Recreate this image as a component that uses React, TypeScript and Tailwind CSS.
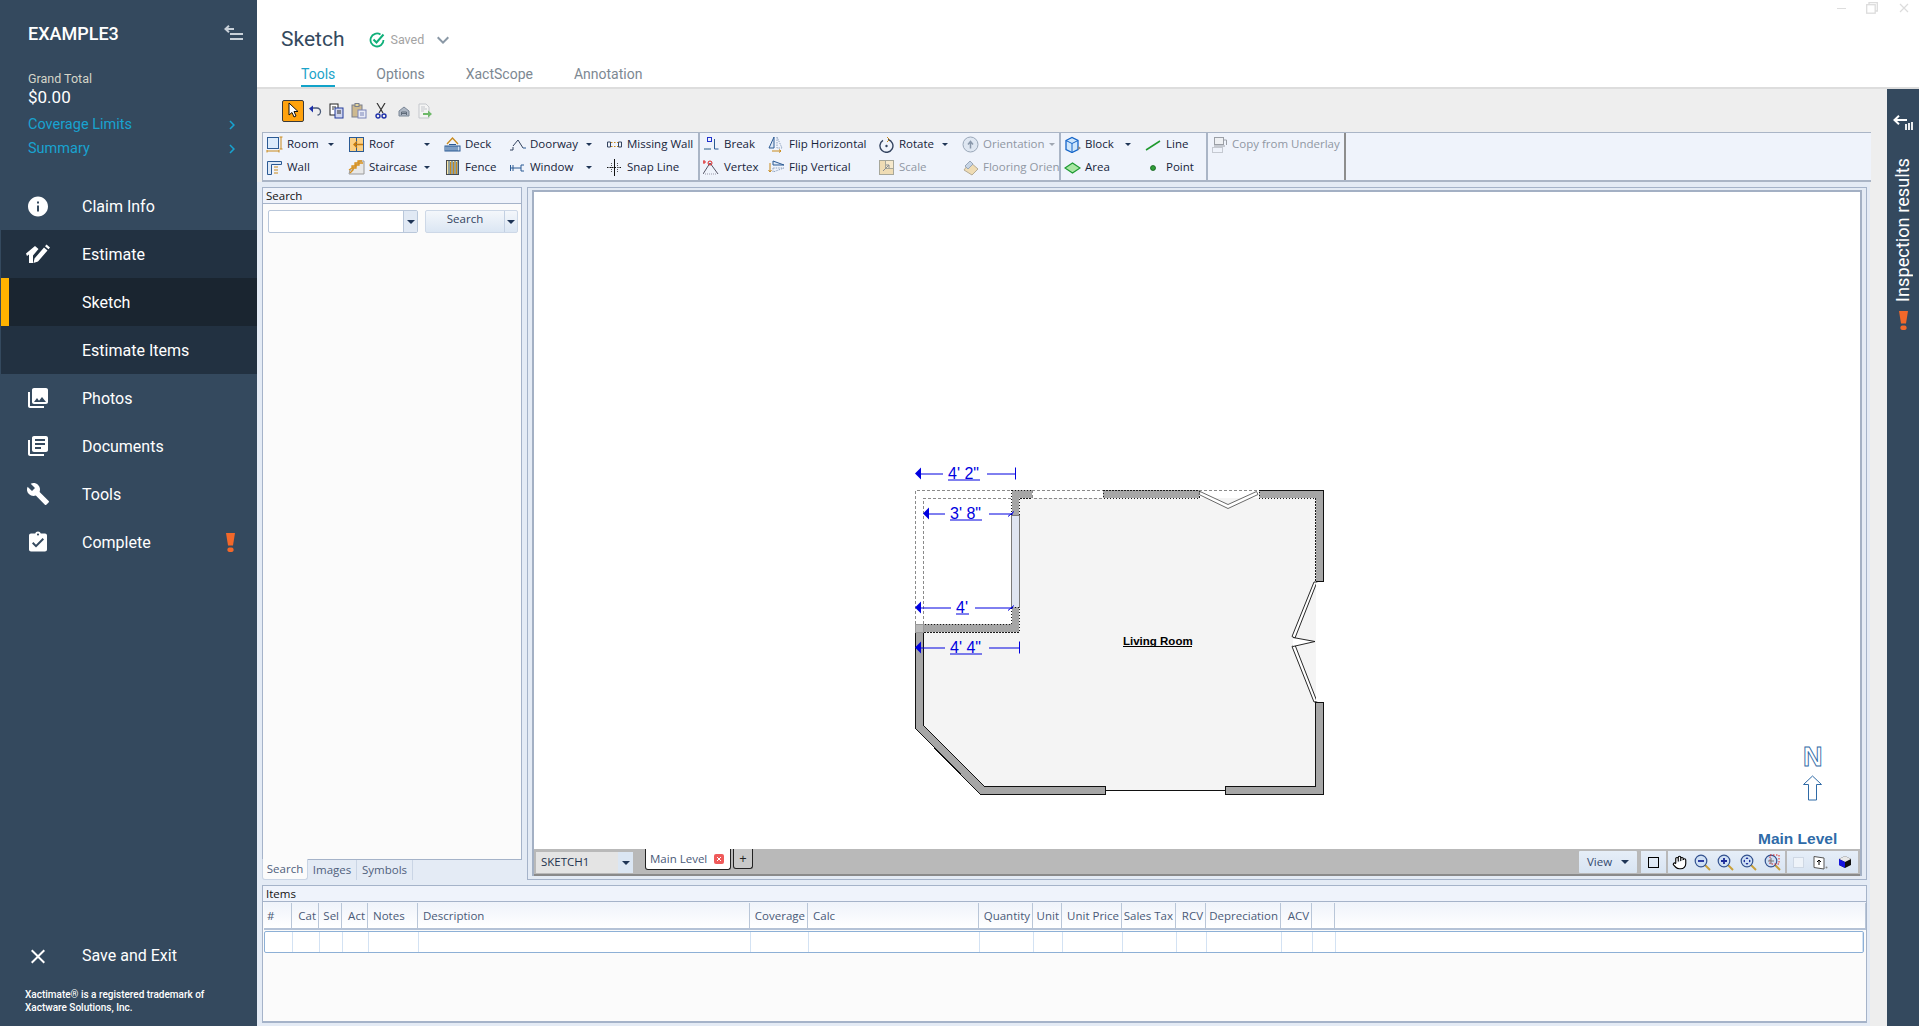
import React from "react";
import { MdInfo, MdPhotoLibrary, MdLibraryBooks, MdBuild, MdAssignmentTurnedIn, MdClose, MdChevronRight, MdKeyboardArrowDown } from "react-icons/md";

const uiFont = "font-['Open_Sans',sans-serif]";

const Ic = ({ children, w = 17 }: { children: React.ReactNode; w?: number }) => (
  <svg width={w} height={17} viewBox="0 0 17 17" fill="none" className="shrink-0">{children}</svg>
);

const B = "#2b5a94";
const O = "#c98a1c";

const icons: Record<string, React.ReactNode> = {
  room: <Ic><rect x="1.5" y="1.5" width="11" height="11" fill="#dcebfb" stroke={B} /><path d="M15 1v12M13.5 1h3M13.5 13h3M1 15h12M1 14v2.500M13 14v2.500" stroke={O} /></Ic>,
  wall: <Ic><path d="M1.500 15.500V2.500h14v3H5.500v10z" fill="#dde8f6" stroke={B} /><path d="M9 7v8M11 7v8" stroke={O} strokeDasharray="2 1" /></Ic>,
  roof: <Ic><rect x="1.500" y="1.500" width="14" height="14" fill="#fcd083" stroke={B} /><path d="M8.500 1.500v14" stroke={B} /><path d="M15 8.500H6M9 5.500l-3 3 3 3" stroke="#c77a0c" strokeWidth="1.400" /></Ic>,
  stair: <Ic><path d="M1 15l1-4h3V8h3V5h3V2h5v13z" fill="#e8e8e8" stroke="#9a9a9a" /><path d="M1 11l3-2V7h3V4h3V2h4M2 14l3-3V9h3V6h3V4h4" stroke="#d8901a" strokeWidth="1.300" /></Ic>,
  deck: <Ic><path d="M3 8l5.500-6L14 8" stroke="#c98a1c" strokeWidth="1.300" /><path d="M5 8.500h7" stroke={B} /><rect x="1" y="10" width="15" height="5" fill="#cfdff2" stroke={B} /><path d="M3 10v5M5 10v5M7 10v5M9 10v5M11 10v5M13 10v5" stroke={B} /></Ic>,
  fence: <Ic><rect x="2.500" y="1.500" width="12" height="14" fill="#f7e6a8" stroke="#4a4a4a" /><path d="M5 1.500v14M8 1.500v14M11 1.500v14M14 1.500v14" stroke={B} /><path d="M6.500 3v12M9.500 3v12M12.500 3v12" stroke={O} /></Ic>,
  door: <Ic><path d="M1 14h3v-3M4 10l5-6 5 8" stroke="#33435f" /><path d="M14 12h3" stroke={B} /></Ic>,
  window: <Ic><path d="M1.500 6v6M1.500 9H4M4 6v6M4 9h8M12 6h3M12 12h3M12 6v6" stroke={B} /></Ic>,
  missing: <Ic><path d="M1.500 6v5h3V6zM12.500 6v5h3V6z" stroke="#33435f" /><path d="M5 6.500h7M5 10.500h7" stroke={O} strokeDasharray="1.500 1.500" /></Ic>,
  snap: <Ic><path d="M8.500 0v17" stroke="#111" /><path d="M1 8.500h15" stroke="#111" strokeDasharray="1.500 1" /><path d="M5.500 4v9M11.500 4v9" stroke="#555" strokeDasharray="1 1" /></Ic>,
  break: <Ic><rect x="4.500" y="1.500" width="4" height="4" stroke="#2233cc" /><path d="M11.500 3v10h4M1 13h7" stroke={B} /><path d="M1 13h7" stroke="#8aa" strokeDasharray="1 1" /></Ic>,
  vertex: <Ic><path d="M0 15L7 4l8 11" stroke="#556" /><path d="M2 15h11" stroke="#99a" strokeDasharray="1 1" /><circle cx="7" cy="4" r="2" stroke="#d22" /><path d="M1 1v4M-1 3h4" stroke="#d22" /></Ic>,
  flipH: <Ic><path d="M6 1v11H1z" fill="#dfe8f5" stroke={B} /><path d="M9 1v11h5z" stroke="#8fa3c0" strokeDasharray="1.500 1" /><path d="M4 15h9M11 13.500l2 1.500-2 1.500" stroke={O} /></Ic>,
  flipV: <Ic><path d="M5 6V2l11 4z" fill="#dfe8f5" stroke={B} /><path d="M5 9v4l11-4z" stroke="#8fa3c0" strokeDasharray="1.500 1" /><path d="M2 4v9M.5 11l1.500 2 1.500-2" stroke={O} /></Ic>,
  rotate: <Ic><path d="M5 4.300A6.500 6.500 0 1 0 10 3.500" stroke="#33435f" strokeWidth="1.400" /><path d="M9 1l2.500 2.500L9 6" stroke={O} /><circle cx="8.500" cy="10" r="1.200" fill="#33435f" /></Ic>,
  scale: <Ic><rect x="1.500" y="1.500" width="14" height="14" fill="#efdcb4" stroke="#a7a79a" /><rect x="7.500" y="1.500" width="8" height="8" fill="#f6e9cc" stroke="#a7a79a" /><path d="M5 12l6-6M8 6h3v3" stroke="#8b8f93" /></Ic>,
  orient: <Ic><circle cx="8.500" cy="8.500" r="7.500" fill="#dfe7f2" stroke="#9aa7b8" /><path d="M8.500 12.500V6M6 8.500l2.500-3 2.500 3" stroke="#8a98ab" strokeWidth="1.500" /></Ic>,
  flooring: <Ic><path d="M2 11l6-8 8 7-6 6z" fill="#efdcb4" stroke="#b5ab95" /><path d="M3 7l5-5 3 3-5 5z" fill="#c7d5e6" stroke="#9aa7b8" /></Ic>,
  block: <Ic><path d="M2 4.500L8 1.500l6 3v9l-6 3-6-3z" fill="#cfe6fb" stroke="#1464c8" strokeWidth="1.300" /><path d="M2 4.500l6 3 6-3M8 7.500v9" stroke="#1464c8" /><path d="M14 10l3 2-3 2z" fill="#888" /></Ic>,
  area: <Ic><path d="M1 9l7.500-5L16 9l-7.500 5z" fill="#a9e6a3" stroke="#1d9a32" strokeWidth="1.200" /></Ic>,
  line: <Ic><path d="M1 14L15 5" stroke="#1f9a2e" strokeWidth="1.500" /></Ic>,
  point: <Ic><circle cx="8" cy="9" r="2.500" fill="#2e9e38" stroke="#125e1a" strokeWidth=".800" /></Ic>,
  copyU: <Ic><rect x="3.500" y="1.500" width="9" height="7" fill="#eef0f3" stroke="#9b9fa6" /><path d="M3 10h11M12.500 4h3v5" stroke="#9b9fa6" /><rect x="1.500" y="11.500" width="10" height="5" stroke="#9b9fa6" strokeDasharray="1 1" /></Ic>,
};

const Caret = ({ c = "#1f3556" }: { c?: string }) => (
  <svg width="6" height="3" viewBox="0 0 8 4" className="ml-auto shrink-0"><path d="M0 0h8L4 4z" fill={c} /></svg>
);

const Tool = ({ icon, label, caret, off, pr = "pr-[11px]" }: { icon: string; label: string; caret?: boolean; off?: boolean; pr?: string }) => (
  <div className={`flex items-center gap-[4px] pl-[3px] min-w-0 overflow-hidden whitespace-nowrap ${pr} ${off ? "text-[#8f97a3]" : "text-[#16233a]"}`}>
    {icons[icon]}
    <span>{label}</span>
    {caret && <Caret c={off ? "#a0a7b2" : "#1f3556"} />}
  </div>
);

const Ribbon = () => (
  <div className={`${uiFont} ml-[5px] mr-[16px] flex h-[50px] bg-[#eff3fb] border-t border-b-[2px] border-[#aab5c6] text-[11.5px]`}>
    <div className="grid h-full w-[438px] grid-cols-[82px_96px_65px_97px_97px] grid-rows-[22px_24px] border-l border-r-[2px] border-[#aab5c6]">
      <Tool icon="room" label="Room" caret /><Tool icon="roof" label="Roof" caret /><Tool icon="deck" label="Deck" /><Tool icon="door" label="Doorway" caret /><Tool icon="missing" label="Missing Wall" pr="" />
      <Tool icon="wall" label="Wall" /><Tool icon="stair" label="Staircase" caret /><Tool icon="fence" label="Fence" /><Tool icon="window" label="Window" caret /><Tool icon="snap" label="Snap Line" />
    </div>
    <div className="grid h-full w-[361px] grid-cols-[65px_110px_84px_100px] grid-rows-[22px_24px] border-r-[2px] border-[#aab5c6]">
      <Tool icon="break" label="Break" pr="" /><Tool icon="flipH" label="Flip Horizontal" pr="" /><Tool icon="rotate" label="Rotate" caret /><Tool icon="orient" label="Orientation" caret off pr="pr-[5px]" />
      <Tool icon="vertex" label="Vertex" pr="" /><Tool icon="flipV" label="Flip Vertical" pr="" /><Tool icon="scale" label="Scale" off /><Tool icon="flooring" label="Flooring Orientation" off pr="pr-[4px]" />
    </div>
    <div className="grid h-full w-[147px] grid-cols-[81px_64px] grid-rows-[22px_24px] border-r-[2px] border-[#aab5c6]">
      <Tool icon="block" label="Block" caret /><Tool icon="line" label="Line" />
      <Tool icon="area" label="Area" /><Tool icon="point" label="Point" />
    </div>
    <div className="grid h-full w-[138px] grid-rows-[22px_24px] border-r-[2px] border-[#8d8d8d]">
      <Tool icon="copyU" label="Copy from Underlay" off pr="" />
    </div>
  </div>
);

const QuickBar = () => (
  <div className="ml-[25px] flex h-[43px] items-center">
    <div className="flex h-[22px] w-[22px] items-center justify-center rounded-[2px] border border-[#3a3a3a] bg-[#ffa20d]">
      <svg width="14" height="17" viewBox="0 0 14 17"><path d="M3 1v12l3-2.500 2 4.500 2-1-2-4.500h4z" fill="#fff" stroke="#111" /></svg>
    </div>
    <svg width="14" height="12" viewBox="0 0 14 12" fill="none" className="ml-[4px]"><path d="M4 3h5a3.500 3.500 0 0 1 3.500 3.500c0 2-1.500 3.500-3 3.500" stroke="#4a5a78" strokeWidth="1.300" /><path d="M1 3.500L5 .5v7z" fill="#1c2fa8" /></svg>
    <svg width="16" height="16" viewBox="0 0 16 16" className="ml-[7px]" fill="none"><rect x="1" y="1" width="8" height="11" fill="#fff" stroke="#222" /><rect x="6" y="5" width="8" height="10" fill="#cfd5ee" stroke="#223a9a" /><path d="M3 4h4M3 6h2M8 8h4M8 10h4" stroke="#333" /></svg>
    <svg width="16" height="16" viewBox="0 0 16 16" className="ml-[6px]" fill="none"><rect x="1" y="2" width="10" height="12" fill="#cdb98f" stroke="#7a7f8c" /><rect x="4" y="0.500" width="4" height="3" fill="#e4d59a" stroke="#7a7f8c" /><rect x="7" y="7" width="8" height="8" fill="#e8ebf6" stroke="#7b84b8" /><path d="M9 10h4M9 12h4" stroke="#7b84b8" /></svg>
    <svg width="12" height="16" viewBox="0 0 12 16" className="ml-[8px]" fill="none"><path d="M2 0l6 10M10 0L4 10" stroke="#333" strokeWidth="1.200" /><circle cx="3" cy="13" r="2" stroke="#1d2fa8" strokeWidth="1.400" /><circle cx="9" cy="13" r="2" stroke="#1d2fa8" strokeWidth="1.400" /></svg>
    <svg width="12" height="12" viewBox="0 0 12 12" className="ml-[11px]" fill="none"><path d="M1 6l5-4 5 4v5H1z" fill="#aeb7c4" stroke="#7b8796" /><path d="M3.500 10V7h5v3M3.500 8.500h5" stroke="#5e6a79" /></svg>
    <svg width="15" height="16" viewBox="0 0 15 16" className="ml-[8px]" fill="none"><path d="M1 1h7l3 3v11H1z" fill="#f4f4f4" stroke="#c4c7cc" /><path d="M3 4h4M3 6h6M3 8h3" stroke="#c4c7cc" /><path d="M5 10h5V7.500l4 3.500-4 3.500V12H5z" fill="#6fb96a" /></svg>
  </div>
);

const SearchPanel = () => (
  <div className={`${uiFont} flex w-[260px] flex-col text-[11.5px]`}>
    <div className="flex min-h-0 flex-1 flex-col border border-[#a5b3c9] bg-[#fbfbfb]">
      <div className="h-[16px] border-b border-[#a5b3c9] bg-[#eff3fb] pl-[3px] leading-[15px] text-[#111]">Search</div>
      <div className="flex h-[23px] items-stretch gap-[7px] pl-[5px] pr-[3px] mt-[6px]">
        <div className="flex w-[150px] rounded-[2px] border border-[#b9c7da] bg-white">
          <div className="flex-1" />
          <div className="flex w-[14px] items-center justify-center border-l border-[#b9c7da] bg-[#e1e9f4]"><svg width="8" height="4" viewBox="0 0 8 4"><path d="M0 0h8L4 4z" fill="#1f3556" /></svg></div>
        </div>
        <div className="flex flex-1 rounded-[2px] border border-[#cdd8e7] bg-linear-to-b from-[#f4f7fb] to-[#dbe6f3]">
          <div className="flex-1 text-center leading-[16px] text-[#33445f]">Search</div>
          <div className="flex w-[13px] items-center justify-center border-l border-[#c3d0e2]"><svg width="8" height="4" viewBox="0 0 8 4"><path d="M0 0h8L4 4z" fill="#1f3556" /></svg></div>
        </div>
      </div>
    </div>
    <div className="flex h-[20px] text-[#4f607c]">
      <div className="flex w-[46px] items-center justify-center rounded-b-[3px] border-x border-b border-[#cad5e5] bg-[#fbfbfb] -mt-px">Search</div>
      <div className="flex w-[49px] items-center justify-center border-r border-[#cad5e5]">Images</div>
      <div className="flex w-[56px] items-center justify-center border-r border-[#cad5e5]">Symbols</div>
    </div>
  </div>
);

const Plan = () => {
  const wall = "#a6a6a6";
  const dot = { stroke: "#1a1a1a", strokeDasharray: "1.500 1.500" };
  const dim = "#0000e0";
  const Dim = ({ y, head, l1, t, tx, ux, uw, l2, l3, tick }: any) => (
    <g stroke="none">
      <path d={`M${head} ${y}l6 -6v12z`} fill={dim} />
      <path d={`M${head + 5} ${y + .5}H${l1}M${l2} ${y + .5}H${l3}`} stroke={dim} />
      <text x={tx} y={y + 5} fontFamily="'Liberation Sans',sans-serif" fontSize="16" fill={dim}>{t}</text>
      <path d={`M${ux} ${y + 6.500}h${uw}`} stroke={dim} />
      {tick === "bar" ? <path d={`M${l3 + .5} ${y - 6}v12`} stroke={dim} /> : <path d={`M${l3 - 5} ${y + 3}l6 -5`} stroke={dim} />}
    </g>
  );
  return (
    <svg viewBox="534 193 1326 656" className="absolute inset-0 h-full w-full" fill="none" shapeRendering="crispEdges">
      <path d="M1019 498H1316V786H1225V790H1105V786H984L923 726V632H1019Z" fill="#f4f4f4" />
      <path d="M915.500 624V490.500H1011M923.500 624V498.500H1011" stroke="#8a8a8a" strokeDasharray="3 2" />
      <path d="M1011.500 490.500h20.500v8h-13v17h-7.500z" fill={wall} stroke="#1a1a1a" strokeDasharray="1.500 1.500" />
      <rect x="1011.500" y="515.500" width="7.500" height="92" fill="#dfe5f1" stroke="#7a7a7a" />
      <path d="M1011.500 607.500h7.500v25h-103.500v-8h96z" fill={wall} stroke="#1a1a1a" strokeDasharray="1.500 1.500" />
      <rect x="1032" y="490.500" width="71" height="8" fill="#fff" stroke="#8a8a8a" strokeDasharray="3 2" />
      <rect x="1103" y="490.500" width="96" height="8" fill={wall} {...dot} />
      <path d="M1259 490.500h64.500v91.500h-8V498.500H1259z" fill={wall} {...dot} />
      <path d="M1316 582h7.500v-91.500" stroke="#111" />
      <path d="M1259 490.500h64.500" stroke="#111" />
      <path d="M1199 490.500h60" stroke="#8a8a8a" strokeDasharray="3 2" />
      <path d="M1315.500 702.500h8v92h-98.500v-8h90.500z" fill={wall} stroke="#111" />
      <path d="M915.500 632.500h8V726L984 786.500h121.500v8H980L915.500 729z" fill={wall} stroke="#111" />
      <path d="M915.500 624.500h8v8h-8z" fill="#b9b9b9" stroke="#999" />
      <path d="M1105.500 790.500H1225" stroke="#111" />
      <g shapeRendering="auto">
        <path d="M1199 495l29 14 30-14-1.500-3-28.500 13-28-13z" fill="#fff" stroke="#444" strokeWidth=".800" />
        <path d="M1314 582.500l-22 54.500 3 1.500 22-56z" fill="#fff" stroke="#111" strokeWidth=".900" />
        <path d="M1292 647l22 55.500 3-.500-22-56.500z" fill="#fff" stroke="#111" strokeWidth=".900" />
        <path d="M1293 638l22 4-22 5" stroke="#111" strokeWidth=".900" fill="#fff" />
        <rect x="1316" y="583" width="7" height="119" fill="#fff" />
      </g>
      <g shapeRendering="auto">
        <Dim y={474} head={915} l1={943} t={`4' 2"`} tx={948} ux={948} uw={32} l2={987} l3={1015} tick="bar" />
        <Dim y={514} head={923} l1={945} t={`3' 8"`} tx={950} ux={950} uw={32} l2={989} l3={1013} tick="slash" />
        <Dim y={608} head={915} l1={951} t={`4'`} tx={956} ux={956} uw={13} l2={975} l3={1013} tick="slash" />
        <Dim y={648} head={915} l1={945} t={`4' 4"`} tx={950} ux={950} uw={32} l2={989} l3={1019} tick="bar" />
        <text x="1123" y="645" fontFamily="'Liberation Sans',sans-serif" fontWeight="700" fontSize="11.500" fill="#000">Living Room</text>
        <path d="M1123 647h69" stroke="#000" />
        <text x="1803" y="766" fontFamily="'Liberation Sans',sans-serif" fontWeight="700" fontSize="27" fill="#fff" stroke="#2f6aa6" strokeWidth=".900">N</text>
        <path d="M1812.500 776.500l9 8.500h-5v15.500h-8V785h-5z" fill="#fff" stroke="#2f6aa6" />
        <text x="1758" y="844" fontFamily="'Liberation Sans',sans-serif" fontWeight="700" fontSize="15.500" fill="#2f6ba8">Main Level</text>
      </g>
    </svg>
  );
};

const Mag = ({ children }: { children?: React.ReactNode }) => (
  <svg width="17" height="17" viewBox="0 0 17 17" fill="none">
    <path d="M10 10l6 6" stroke="#c9a03a" strokeWidth="2" />
    <circle cx="7" cy="7" r="5.800" fill="#cfe0f5" stroke="#33528f" strokeWidth="1.200" />
    {children}
  </svg>
);

const StatusBar = () => (
  <div className={`${uiFont} flex h-[27px] items-start border-b-[2px] border-[#8a8a8a] bg-[#b9b9b9] pr-[2px] text-[11.5px]`}>
    <div className="ml-[2px] mt-[3px] flex h-[21px] w-[97px] bg-[#e4e4e4] text-[#23324e]">
      <div className="flex-1 pl-[5px] leading-[20px]">SKETCH1</div>
      <div className="flex w-[15px] items-center justify-center bg-[#dbe6f3]"><svg width="8" height="4" viewBox="0 0 8 4"><path d="M0 0h8L4 4z" fill="#1f3556" /></svg></div>
    </div>
    <div className="ml-[12px] flex h-[21px] w-[86px] items-center gap-[7px] rounded-b-[3px] border-x border-b border-[#222] bg-white pl-[4px] text-[#4a5a78]">
      <span>Main Level</span>
      <svg width="10" height="10" viewBox="0 0 10 10"><rect width="10" height="10" rx="2" fill="#ef5a5a" /><path d="M3 3l4 4M7 3L3 7" stroke="#fff" /></svg>
    </div>
    <div className="ml-[2px] flex h-[20px] w-[20px] items-center justify-center rounded-b-[3px] border-x border-b border-[#222] bg-[#c9c9c9] text-[13px] leading-none text-[#222]">+</div>
    <div className="ml-auto flex h-[22px] w-[58px] items-center justify-between rounded-[1px] bg-linear-to-b from-[#e6eef8] to-[#d8e4f2] px-[8px] mt-[2px] text-[#33496e]">
      <span>View</span>
      <svg width="8" height="4" viewBox="0 0 8 4"><path d="M0 0h8L4 4z" fill="#1f3556" /></svg>
    </div>
    <div className="ml-[4px] mt-[2px] flex h-[22px] w-[25px] items-center justify-center bg-linear-to-b from-[#e6eef8] to-[#d8e4f2]">
      <div className="h-[11px] w-[11px] border border-black" />
    </div>
    <div className="ml-[2px] mt-[2px] flex h-[22px] w-[117px] items-center justify-around bg-linear-to-b from-[#e6eef8] to-[#d8e4f2] px-[1px]">
      <svg width="15" height="15" viewBox="0 0 24 24" fill="#fff" stroke="#000" strokeWidth="1.800"><path d="M18 11V6a2 2 0 0 0-4 0M14 10V4a2 2 0 0 0-4 0v2M10 10.500V6a2 2 0 0 0-4 0v8" /><path d="M18 8a2 2 0 1 1 4 0v6a8 8 0 0 1-8 8h-2c-2.800 0-4.500-.900-6-2.400L2.400 16a2 2 0 0 1 2.800-2.800L6 14" /></svg>
      <Mag><path d="M4 7h6" stroke="#1c2c9a" strokeWidth="1.800" /></Mag>
      <Mag><path d="M4 7h6M7 4v6" stroke="#1c2c9a" strokeWidth="1.800" /></Mag>
      <Mag><path d="M7 3l1.500 2h-3zM7 11l1.500-2h-3zM3 7l2-1.500v3zM11 7l-2-1.500v3z" fill="#1c2c9a" /></Mag>
      <Mag><rect x="6" y="1" width="9" height="9" stroke="#d22" strokeDasharray="1.500 1.500" /><path d="M4 7h6M7 4v6" stroke="#777" /></Mag>
    </div>
    <div className="ml-[2px] mt-[2px] flex h-[22px] w-[71px] items-center justify-around bg-linear-to-b from-[#e6eef8] to-[#d8e4f2] px-[1px]">
      <div className="h-[11px] w-[11px] border border-[#cfd8e4] bg-[#eef3f9]" />
      <svg width="15" height="15" viewBox="0 0 15 15" fill="none"><path d="M1 1.500l10 1.500v11L1 12.500z" fill="#fff" stroke="#555" /><path d="M6 10V5.500M4 7l2-2 2 2" stroke="#000" /><circle cx="13.500" cy="12.500" r="1" fill="#888" /></svg>
      <svg width="14" height="14" viewBox="0 0 14 14"><path d="M7 1l6 3v6l-6 3-6-3V4z" fill="#111" /><path d="M7 1l6 3-6 3-6-3z" fill="#e8e8e8" /><path d="M1 4l6 3v6l-6-3z" fill="#1414e0" /></svg>
    </div>
  </div>
);

const cols = "grid grid-cols-[28px_27px_23px_26px_50px_332px_58px_171px_54px_29px_60px_54px_30px_75px_31px_23px_1fr]";
const heads: [string, string][] = [
  ["#", "l3"], ["Cat", "r"], ["Sel", "r"], ["Act", "r"], ["Notes", "l"], ["Description", "l"], ["Coverage", "r"], ["Calc", "l"],
  ["Quantity", "r"], ["Unit", "r"], ["Unit Price", "r"], ["Sales Tax", "r"], ["RCV", "r"], ["Depreciation", "r"], ["ACV", "r"], ["", "l"], ["", "l"],
];

const Items = () => (
  <div className={`${uiFont} flex h-[138px] flex-col border-x border-b-[2px] border-t border-[#a5b3c9] bg-[#fbfbfb] text-[11.5px]`}>
    <div className="h-[16px] border-b border-[#a5b3c9] bg-[#eff3fb] pl-[3px] leading-[15px] text-[#111]">Items</div>
    <div className={`${cols} ml-[1px] h-[28px] border-b-[2px] border-[#b4c2d6] bg-linear-to-b from-[#eff3fa] to-white pt-[1px] text-[#4a5a78]`}>
      {heads.map(([h, a], i) => (
        <div key={i} className={`flex items-center whitespace-nowrap border-r border-[#b9c6d8] ${a === "r" ? "justify-end pr-[2px]" : a === "l3" ? "pl-[3px]" : "pl-[5px]"}`}>{h}</div>
      ))}
    </div>
    <div className={`${cols} relative ml-[1px] mr-[2px] mt-px h-[22px] rounded-[2px] border border-[#8db0d6] bg-white`}>
      {heads.map((_, i) => <div key={i} className="border-r border-[#d3e2f3]" />)}
    </div>
  </div>
);

const Exclaim = ({ className = "" }: { className?: string }) => (
  <svg width="9" height="19" viewBox="0 0 9 19" className={className}><path d="M0 0h9L7 12.500H2z" fill="#f2682a" /><rect x="1.500" y="14.500" width="6" height="4.500" rx="1.800" fill="#f2682a" /></svg>
);

const Row = ({ icon, label, cls = "", bar, right }: { icon?: React.ReactNode; label: string; cls?: string; bar?: boolean; right?: React.ReactNode }) => (
  <div className={`ml-px flex h-12 items-center text-[16px] text-white ${cls}`}>
    {bar && <div className="h-full w-[8px] bg-[#ffb300] -mr-[8px]" />}
    <div className="ml-[25px] flex w-[24px] items-center justify-center">{icon}</div>
    <div className="ml-[32px] pt-[2px]">{label}</div>
    {right && <div className="ml-auto mr-[22px] flex">{right}</div>}
  </div>
);

const EstimateIcon = () => (
  <svg width="24" height="20" viewBox="0 0 24 20" fill="#fff">
    <path d="M0 9.500L9 2l3.500 3L7 11.500V19H3v-8.500L1 12z" />
    <path d="M8.500 14.500L18 3.500l3.500 3L12 17.500l-4.500 1.500zM19 2.300l1.500-1.800 3.500 3-1.500 1.800z" />
  </svg>
);

const Sidebar = () => (
  <aside className="flex w-[257px] shrink-0 flex-col bg-[#34495e] font-[Roboto,sans-serif]">
    <div className="h-[182px] shrink-0">
      <div className="flex h-[66px] items-center justify-between pl-[28px] pr-[14px]">
        <span className="text-[18px] font-medium text-white">EXAMPLE3</span>
        <svg width="19" height="16" viewBox="0 0 19 16" fill="none" stroke="#c9d1d9" strokeWidth="2"><path d="M10 4H2M5 .8L1.500 4 5 7.200" /><path d="M6 9h13M6 14h13" /></svg>
      </div>
      <div className="mt-[3px] h-[20px] pl-[28px] text-[12.500px] leading-[20px] text-[#d5d5c8]">Grand Total</div>
      <div className="-mt-[2px] h-[20px] pl-[28px] text-[17px] leading-[20px] text-white">$0.00</div>
      <div className="mt-[6px] flex h-[24px] items-center justify-between pl-[28px] pr-[16px] text-[14.500px] text-[#18a3d0]"><span>Coverage Limits</span><MdChevronRight size={18} /></div>
      <div className="flex h-[24px] items-center justify-between pl-[28px] pr-[16px] text-[14.500px] text-[#18a3d0]"><span>Summary</span><MdChevronRight size={18} /></div>
    </div>
    <Row icon={<MdInfo size={25} />} label="Claim Info" />
    <Row icon={<EstimateIcon />} label="Estimate" cls="bg-[#223141]" />
    <Row label="Sketch" cls="bg-[#1a2530]" bar />
    <Row label="Estimate Items" cls="bg-[#223141]" />
    <Row icon={<MdPhotoLibrary size={26} />} label="Photos" />
    <Row icon={<MdLibraryBooks size={26} />} label="Documents" />
    <Row icon={<MdBuild size={24} />} label="Tools" />
    <Row icon={<MdAssignmentTurnedIn size={25} />} label="Complete" right={<Exclaim />} />
    <div className="mt-auto">
      <Row icon={<MdClose size={27} className="translate-y-[1px]" />} label="Save and Exit" />
      <div className="mb-[12px] mt-[9px] pl-[25px] text-[10px] font-medium leading-[13px] text-white">
        Xactimate® is a registered trademark of<br />Xactware Solutions, Inc.
      </div>
    </div>
  </aside>
);

const Header = () => (
  <header className="flex h-[89px] shrink-0 justify-between border-b-2 border-[#dddddd] bg-white font-[Roboto,sans-serif]">
    <div>
      <div className="flex h-[54px] items-end pb-px pl-[24px]">
        <div className="flex h-[26px] items-center">
          <span className="text-[21px] text-[#34495e]">Sketch</span>
          <svg width="16" height="16" viewBox="0 0 16 16" fill="none" className="ml-[25px]"><path d="M14.500 8a6.500 6.500 0 1 1-3-5.500" stroke="#10b07a" strokeWidth="1.800" /><path d="M4.500 7.500l3 3 7-8" stroke="#10b07a" strokeWidth="2" /></svg>
          <span className="ml-[5px] text-[12.500px] text-[#a3a3a3]">Saved</span>
          <MdKeyboardArrowDown size={24} className="ml-[7px] text-[#8a98a6]" />
        </div>
      </div>
      <nav className="ml-[44px] mt-[8px] flex h-[25px] gap-[41px] text-[14px] text-[#7d8892]">
        <div className="h-[25px] border-b-2 border-[#12a3c9] pt-[2px] text-[#1ba3c9]">Tools</div>
        <div className="pt-[2px]">Options</div>
        <div className="pt-[2px]">XactScope</div>
        <div className="pt-[2px]">Annotation</div>
      </nav>
    </div>
    <div className="flex h-[14px] items-center gap-[17px] pr-[10px] pt-[2px] text-[#e0e0e0]">
      <div className="mr-[3px] h-px w-[9px] bg-[#dddddd]" />
      <svg width="12" height="12" viewBox="0 0 12 12" fill="none" stroke="#dcdcdc" strokeWidth="1.300"><rect x=".7" y="2.700" width="8.500" height="8.500" /><path d="M3 2.500V.7h8.300V9H9.500" /></svg>
      <svg width="10" height="10" viewBox="0 0 10 10" className="ml-[4px]" fill="none" stroke="#dcdcdc" strokeWidth="1.200"><path d="M1 1l8 8M9 1L1 9" /></svg>
    </div>
  </header>
);

const Rail = () => (
  <div className="flex w-[32px] shrink-0 flex-col items-center bg-[#34495e] pt-[26px] font-[Roboto,sans-serif]">
    <svg width="20" height="16" viewBox="0 0 20 16" fill="none" stroke="#fff" strokeWidth="2"><path d="M14 5H2M6 .8L1.500 5 6 9.200" /><path d="M13 9v6M16 8v7M19 7v8" strokeWidth="1.800" /></svg>
    <div className="mt-[27px] rotate-180 text-[18.200px] leading-[20px] text-white [writing-mode:vertical-rl]">Inspection results</div>
    <Exclaim className="mt-[9px]" />
  </div>
);

export default function App() {
  return (
    <div className="flex h-screen w-full overflow-hidden bg-white">
      <Sidebar />
      <div className="flex min-w-0 flex-1 flex-col">
        <Header />
        <div className="flex min-h-0 flex-1">
          <main className="flex min-w-0 flex-1 flex-col bg-[#eeeeee]">
            <QuickBar />
            <Ribbon />
            <div className="mr-[17px] flex min-h-0 flex-1 flex-col gap-[5px] bg-[#e4ebf5] pb-[3px] pl-[5px] pr-[3px] pt-[5px]">
              <div className="flex min-h-0 flex-1 gap-[5px]">
                <SearchPanel />
                <div className="flex min-w-0 flex-1 flex-col border border-[#a5b3c9] pb-[3px] pl-[4px] pr-[4px] pt-[2px]">
                  <div className="relative min-h-0 flex-1 border-2 border-b-0 border-[#a3b0c4] bg-white">
                    <Plan />
                  </div>
                  <div className="border-x-2 border-[#a3b0c4]"><StatusBar /></div>
                </div>
              </div>
              <Items />
            </div>
          </main>
          <Rail />
        </div>
      </div>
    </div>
  );
}
